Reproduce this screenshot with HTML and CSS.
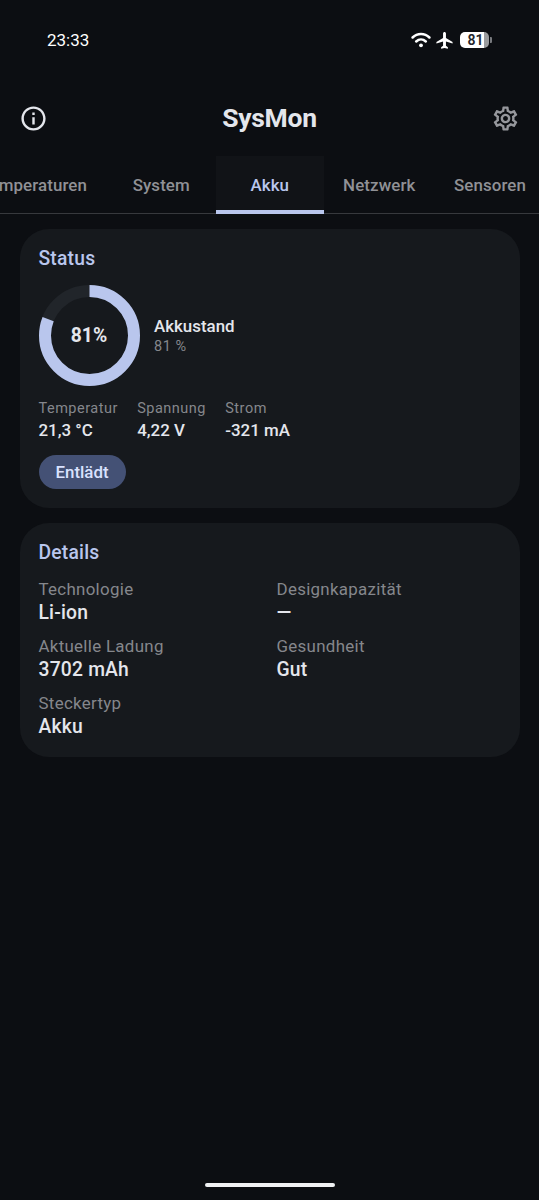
FILE: index.html
```html
<!DOCTYPE html>
<html lang="de">
<head>
<meta charset="utf-8">
<title>SysMon</title>
<link rel="stylesheet" href="styles.css">
</head>
<body>
<div class="screen">
  <div class="statusbar">
    <span class="clock">23:33</span>
    <div class="indicators">
      <svg class="wifi" viewBox="0 0 20 16" fill="none" stroke="#fff" stroke-width="2.5" stroke-linecap="round"><path d="M1.6 5.5C6.3.8 13.700.8 18.400 5.500M5.200 9.500C8 6.900 12 6.900 14.800 9.500"/><circle cx="10" cy="13.300" r="1.900" fill="#fff" stroke="none"/></svg>
      <svg class="plane" viewBox="2 2 20 20" fill="#fff"><path d="M21.500 15.500v-1.700L13.700 9V3.800C13.700 2.800 12.900 2 12 2s-1.700.8-1.700 1.800V9l-7.800 4.800v1.700l7.800-2.200v5L8 20v1.700l4-1 4 1V20l-2.300-1.700v-5z"/></svg>
      <div class="battery"><span class="battery-level">81</span></div>
      <span class="battery-tip"></span>
    </div>
  </div>
  <header class="appbar">
    <svg class="icon info" viewBox="0 0 24 24"><path d="M11 7h2v2h-2zm0 4h2v6h-2zm1-9C6.480 2 2 6.480 2 12s4.480 10 10 10 10-4.480 10-10S17.520 2 12 2zm0 18c-4.410 0-8-3.590-8-8s3.590-8 8-8 8 3.590 8 8-3.590 8-8 8z"/></svg>
    <h1 class="title">SysMon</h1>
    <svg class="icon gear" viewBox="0 0 24 24"><path d="M19.430 12.980c.04-.32.07-.64.07-.98 0-.34-.03-.66-.07-.98l2.110-1.650c.19-.15.24-.42.12-.64l-2-3.460c-.09-.16-.26-.25-.44-.25-.06 0-.12.01-.17.03l-2.490 1c-.52-.4-1.080-.73-1.690-.98l-.38-2.650C14.460 2.180 14.250 2 14 2h-4c-.25 0-.46.18-.49.42l-.38 2.650c-.61.25-1.170.59-1.690.98l-2.490-1c-.06-.02-.12-.03-.18-.03-.17 0-.34.09-.43.25l-2 3.460c-.13.22-.07.49.12.64l2.110 1.650c-.04.32-.07.65-.07.98 0 .33.03.66.07.98l-2.110 1.650c-.19.15-.24.42-.12.64l2 3.460c.09.16.26.25.44.25.06 0 .12-.01.17-.03l2.490-1c.52.4 1.080.73 1.690.98l.38 2.650c.03.24.24.42.49.42h4c.25 0 .46-.18.49-.42l.38-2.650c.61-.25 1.170-.59 1.690-.98l2.490 1c.06.02.12.03.18.03.17 0 .34-.09.43-.25l2-3.460c.12-.22.07-.49-.12-.64l-2.110-1.650zm-1.980-1.710c.04.31.05.52.05.73 0 .21-.02.43-.05.73l-.14 1.130.89.7 1.080.84-.7 1.210-1.270-.51-1.040-.42-.9.68c-.43.32-.84.56-1.250.73l-1.060.43-.16 1.130-.2 1.350h-1.400l-.19-1.350-.16-1.130-1.060-.43c-.43-.18-.83-.41-1.230-.71l-.91-.7-1.060.43-1.270.51-.7-1.210 1.080-.84.89-.7-.14-1.130c-.03-.31-.05-.54-.05-.74s.02-.43.05-.73l.14-1.130-.89-.7-1.080-.84.7-1.210 1.270.51 1.040.42.9-.68c.43-.32.84-.56 1.250-.73l1.060-.43.16-1.130.2-1.350h1.390l.19 1.350.16 1.130 1.060.43c.43.18.83.41 1.230.71l.91.7 1.060-.43 1.270-.51.7 1.210-1.070.85-.89.7.14 1.130zM12 8c-2.210 0-4 1.790-4 4s1.790 4 4 4 4-1.790 4-4-1.790-4-4-4zm0 6c-1.100 0-2-.9-2-2s.9-2 2-2 2 .9 2 2-.9 2-2 2z"/></svg>
  </header>
  <nav class="tabs">
    <div class="tab tab-first">mperaturen</div>
    <div class="tab tab-system">System</div>
    <div class="tab tab-active">Akku</div>
    <div class="tab tab-network">Netzwerk</div>
    <div class="tab tab-last">Sensoren</div>
  </nav>
  <main class="content">
    <section class="card status-card">
      <h2 class="card-title">Status</h2>
      <div class="charge">
        <div class="ring">
          <svg class="ring-svg" viewBox="0 0 101 101" fill="none" stroke-width="12"><circle cx="50.500" cy="50.500" r="44.500" stroke="#21252a"/><circle cx="50.500" cy="50.500" r="44.500" stroke="#b9c6ed" pathLength="100" stroke-dasharray="81 19" transform="rotate(-90 50.500 50.500)"/></svg>
          <span class="ring-value">81%</span>
        </div>
        <div class="charge-text">
          <div class="charge-name">Akkustand</div>
          <div class="small-label">81 %</div>
        </div>
      </div>
      <div class="stats">
        <div class="stat"><div class="small-label">Temperatur</div><div class="stat-value">21,3 °C</div></div>
        <div class="stat"><div class="small-label">Spannung</div><div class="stat-value">4,22 V</div></div>
        <div class="stat"><div class="small-label">Strom</div><div class="stat-value">-321 mA</div></div>
      </div>
      <span class="chip">Entlädt</span>
    </section>
    <section class="card details-card">
      <h2 class="card-title">Details</h2>
      <div class="details">
        <div><div class="label">Technologie</div><div class="value">Li-ion</div></div>
        <div><div class="label">Designkapazität</div><div class="value">—</div></div>
        <div><div class="label">Aktuelle Ladung</div><div class="value">3702 mAh</div></div>
        <div><div class="label">Gesundheit</div><div class="value">Gut</div></div>
        <div><div class="label">Steckertyp</div><div class="value">Akku</div></div>
      </div>
    </section>
  </main>
  <div class="home-indicator"></div>
</div>
</body>
</html>
```
FILE: styles.css
```css
* { box-sizing: border-box; }
body { margin: 0; background: #0c0e12; }
.screen {
  width: 539px;
  height: 1200px;
  display: flex;
  flex-direction: column;
  overflow: hidden;
  font-family: Roboto, sans-serif;
  color: #e4e6ec;
  background: #0c0e12;
}
.statusbar {
  height: 80px;
  display: flex;
  align-items: center;
  justify-content: space-between;
  padding: 0 47px;
}
.clock { font-size: 17px; line-height: 20px; color: #fff; }
.indicators { display: flex; align-items: center; }
.wifi { width: 20px; height: 16px; }
.plane { width: 17px; height: 17px; margin: 0 7px 0 5px; }
.battery {
  width: 29px;
  height: 16px;
  border-radius: 5px;
  background: linear-gradient(90deg, #fff 24px, #9b9c9e 24px);
}
.battery-level {
  display: block;
  padding-left: 2px;
  font-size: 14px;
  line-height: 16px;
  font-weight: 600;
  text-align: center;
  color: #24262b;
}
.battery-tip { width: 2px; height: 6px; margin-left: 1px; border-radius: 0 1px 1px 0; background: #77797d; }
.appbar {
  height: 76px;
  display: flex;
  align-items: center;
  justify-content: space-between;
  padding: 0 19px;
}
.icon { width: 29px; height: 29px; }
.info { fill: #e4e6ec; }
.gear { fill: #96979c; }
.title { margin: 0; font-size: 26.5px; line-height: 34px; font-weight: 700; letter-spacing: -0.3px; }
.tabs {
  height: 58px;
  display: grid;
  grid-template-columns: 107px 108.5px 108.5px 110.5px 104.5px;
  box-shadow: inset 0 -1px #37393d;
}
.tab {
  display: flex;
  align-items: center;
  justify-content: center;
  font-size: 16.9px;
  font-weight: 500;
  letter-spacing: 0.1px;
  color: #909196;
}
.tab-first { justify-content: flex-end; padding-right: 20px; }
.tab-last { justify-content: flex-start; padding-left: 19.5px; }
.tab-active { color: #b9c6ed; background: #111317; border-bottom: 4px solid #b9c6ed; padding-top: 4px; }
.content { flex: 1; display: flex; flex-direction: column; gap: 15px; padding: 15px 19.5px 0; }
.card { border-radius: 29px; background: #16191d; padding: 18px 19px 0; }
.status-card { height: 279px; }
.details-card { height: 234px; }
.card-title { margin: 0; font-size: 19.3px; line-height: 24px; font-weight: 500; letter-spacing: 0.2px; color: #b9c6ed; }
.charge { display: flex; align-items: center; gap: 14.500px; margin-top: 14px; }
.ring { display: grid; width: 101px; height: 101px; place-items: center; }
.ring-svg { grid-area: 1 / 1; width: 101px; height: 101px; }
.ring-value { grid-area: 1 / 1; font-size: 19.3px; line-height: 24px; font-weight: 700; }
.charge-name { font-size: 16.9px; line-height: 22px; font-weight: 500; }
.small-label { font-size: 14.5px; line-height: 20px; letter-spacing: 0.5px; color: #85878c; }
.stats { display: flex; gap: 19.3px; margin-top: 13px; }
.stat-value { font-size: 16.9px; line-height: 22px; font-weight: 500; }
.chip {
  display: flex;
  align-items: center;
  justify-content: center;
  width: 87px;
  height: 34px;
  margin-top: 14px;
  border-radius: 17px;
  font-size: 16.9px;
  font-weight: 500;
  color: #d9e2ff;
  background: #445175;
}
.details { display: grid; grid-template-columns: 238px 1fr; row-gap: 9px; margin-top: 12px; }
.label { font-size: 16.9px; line-height: 24px; letter-spacing: 0.3px; color: #85878c; }
.value { font-size: 19.3px; line-height: 24px; font-weight: 500; letter-spacing: 0.2px; }
.home-indicator { width: 130px; height: 4px; margin: 0 auto 13px; border-radius: 2px; background: #f0f1f3; }
```
